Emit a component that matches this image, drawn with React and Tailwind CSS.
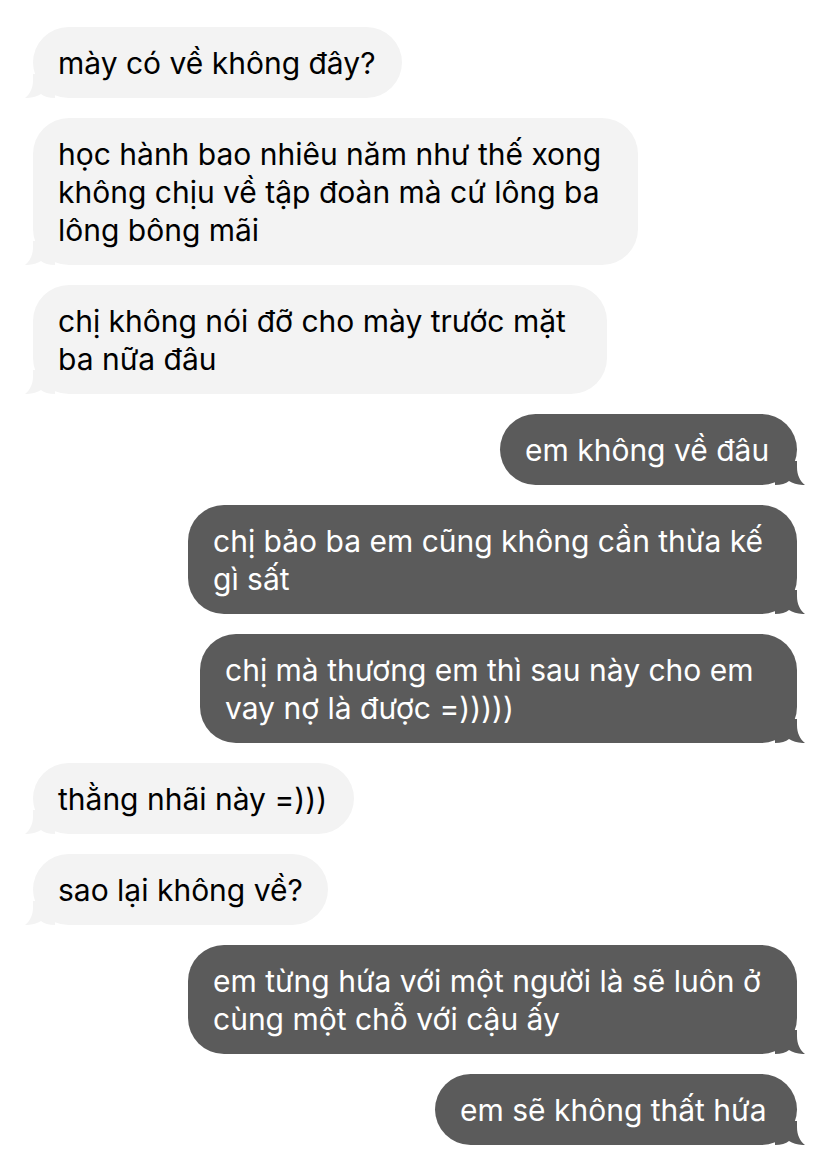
import React from 'react';

const messages = [
  { from: 'them', w: 'w-[369px]', lines: ['mày có về không đây?'] },
  { from: 'them', w: 'w-[605px]', lines: ['học hành bao nhiêu năm như thế xong', 'không chịu về tập đoàn mà cứ lông ba', 'lông bông mãi'] },
  { from: 'them', w: 'w-[574px]', lines: ['chị không nói đỡ cho mày trước mặt', 'ba nữa đâu'] },
  { from: 'me', w: 'w-[297px]', lines: ['em không về đâu'] },
  { from: 'me', w: 'w-[609px]', lines: ['chị bảo ba em cũng không cần thừa kế', 'gì sất'] },
  { from: 'me', w: 'w-[597px]', lines: ['chị mà thương em thì sau này cho em', 'vay nợ là được =)))))'] },
  { from: 'them', w: 'w-[321px]', lines: ['thằng nhãi này =)))'] },
  { from: 'them', w: 'w-[295px]', lines: ['sao lại không về?'] },
  { from: 'me', w: 'w-[609px]', lines: ['em từng hứa với một người là sẽ luôn ở', 'cùng một chỗ với cậu ấy'] },
  { from: 'me', w: 'w-[362px]', lines: ['em sẽ không thất hứa'] },
];

function Tail({ mine }) {
  return (
    <svg
      width="30"
      height="24"
      viewBox="0 0 30 24"
      className={mine ? 'absolute -right-[8px] bottom-0 -scale-x-100' : 'absolute -left-[8px] bottom-0'}
    >
      <path
        d="M8 0 L8 6 C8 14 5 20 0 24 C7 24.2 12 22.5 16 20 C19 22.5 24 24 30 24 L30 0 Z"
        fill={mine ? '#5b5b5b' : '#f3f3f3'}
      />
    </svg>
  );
}

function Bubble({ msg }) {
  const mine = msg.from === 'me';
  return (
    <div className={mine ? 'flex justify-end pr-[31px]' : 'flex justify-start pl-[33px]'}>
      <div
        className={`relative ${msg.w} rounded-[36px] px-[25px] pt-[17px] pb-[16px] text-[30px] leading-[38px] ${
          mine ? 'bg-[#5b5b5b] text-white' : 'bg-[#f3f3f3] text-black'
        }`}
      >
        <Tail mine={mine} />
        <div className="relative">
          {msg.lines.map((l, i) => (
            <div key={i} className="whitespace-nowrap">{l}</div>
          ))}
        </div>
      </div>
    </div>
  );
}

export default function App() {
  return (
    <div
      className="min-h-[1167px] w-[828px] bg-white pt-[27px] flex flex-col gap-[20px]"
      style={{ fontFamily: 'Inter, "Liberation Sans", sans-serif' }}
    >
      {messages.map((m, i) => (
        <Bubble key={i} msg={m} />
      ))}
    </div>
  );
}
